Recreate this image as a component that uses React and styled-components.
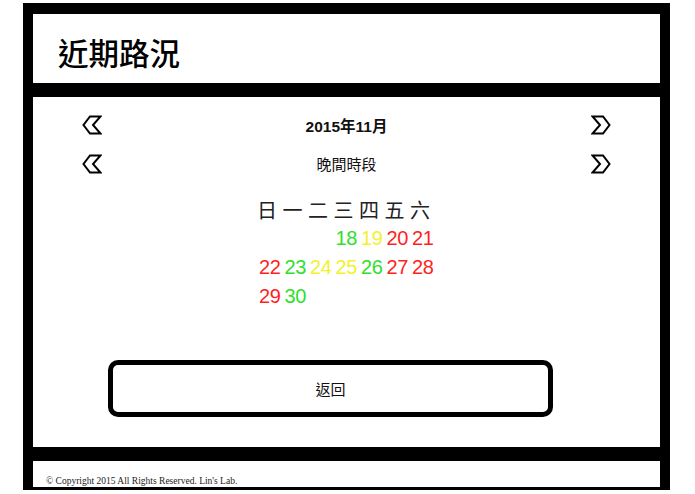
import React from 'react';
import styled, { createGlobalStyle } from 'styled-components';

const GlobalStyle = createGlobalStyle`
  html, body {
    margin: 0;
    padding: 0;
    background: #fff;
  }
  * {
    box-sizing: border-box;
  }
`;

const CJK = `"Liberation Sans", "Noto Sans CJK TC", sans-serif`;

const Frame = styled.div`
  margin: 3px 0 0 23px;
  width: 647px;
  height: 487px;
  background: #000;
  padding: 11px 10px 3px 10px;
  display: flex;
  flex-direction: column;
  gap: 14px;
`;

const Header = styled.header`
  height: 69px;
  background: #fff;
  display: flex;
  align-items: center;
  padding: 8px 0 0 25px;
`;

const Title = styled.h1`
  margin: 0;
  font-family: "Noto Sans CJK TC", sans-serif;
  font-size: 30.5px;
  font-weight: 500;
  color: #000;
  line-height: 1;
`;

const Main = styled.main`
  height: 350px;
  background: #fff;
  padding: 17px 49px 0 49px;
  display: flex;
  flex-direction: column;
`;

const NavRow = styled.div`
  display: grid;
  grid-template-columns: 20px 1fr 20px;
  align-items: center;
  height: 20px;
  margin-bottom: ${(p) => p.$gap || 0}px;
`;

const NavLabel = styled.div`
  text-align: center;
  font-family: ${CJK};
  font-size: ${(p) => (p.$bold ? 15.5 : 15)}px;
  font-weight: ${(p) => (p.$bold ? 700 : 400)};
  color: #111;
`;

const ArrowButton = styled.button`
  border: 0;
  padding: 0;
  background: none;
  width: 20px;
  height: 20px;
  display: block;
  cursor: pointer;
`;

const Calendar = styled.div`
  margin: 22px 0 0 175px;
  display: grid;
  grid-template-columns: repeat(7, 25.5px);
  grid-auto-rows: 29px;
  align-items: center;
`;

const WeekDay = styled.div`
  text-align: left;
  font-family: "Noto Sans CJK TC", sans-serif;
  font-size: 20px;
  color: #222;
  line-height: 29px;
`;

const Day = styled.div`
  text-align: center;
  font-family: "Liberation Sans", Arial, sans-serif;
  font-size: 20px;
  letter-spacing: -0.3px;
  line-height: 29px;
  color: ${(p) => p.$color};
`;

const BackButton = styled.button`
  margin: 49px 0 0 26px;
  width: 445px;
  height: 57px;
  border: 5px solid #000;
  border-radius: 10px;
  background: #fff;
  font-family: "Noto Sans CJK TC", sans-serif;
  font-size: 15px;
  color: #111;
  cursor: pointer;
`;

const Footer = styled.footer`
  height: 26px;
  background: #fff;
  overflow: hidden;
  padding: 14px 0 0 13px;
  font-family: "Liberation Serif", "Times New Roman", serif;
  font-size: 9.5px;
  line-height: 12px;
  color: #222;
`;

const Chevron = ({ dir }) => (
  <svg width="20" height="20" viewBox="0 0 20 20">
    <polygon
      points="8,1.5 18.5,1.5 11,10 18.5,18.5 8,18.5 1.5,10"
      fill="#fff"
      stroke="#000"
      strokeWidth="2"
      strokeLinejoin="miter"
      transform={dir === 'right' ? 'translate(20,0) scale(-1,1)' : undefined}
    />
  </svg>
);

const GREEN = '#2ee02e';
const YELLOW = '#f2f22c';
const RED = '#ff1f1f';

const weekDays = ['日', '一', '二', '三', '四', '五', '六'];
const days = [
  null, null, null,
  { d: 18, c: GREEN },
  { d: 19, c: YELLOW },
  { d: 20, c: RED },
  { d: 21, c: RED },
  { d: 22, c: RED },
  { d: 23, c: GREEN },
  { d: 24, c: YELLOW },
  { d: 25, c: YELLOW },
  { d: 26, c: GREEN },
  { d: 27, c: RED },
  { d: 28, c: RED },
  { d: 29, c: RED },
  { d: 30, c: GREEN },
];

export default function App() {
  return (
    <>
      <GlobalStyle />
      <Frame>
        <Header>
          <Title>近期路況</Title>
        </Header>
        <Main>
          <NavRow $gap={19}>
            <ArrowButton aria-label="上個月"><Chevron dir="left" /></ArrowButton>
            <NavLabel $bold>2015年11月</NavLabel>
            <ArrowButton aria-label="下個月"><Chevron dir="right" /></ArrowButton>
          </NavRow>
          <NavRow>
            <ArrowButton aria-label="上個時段"><Chevron dir="left" /></ArrowButton>
            <NavLabel>晚間時段</NavLabel>
            <ArrowButton aria-label="下個時段"><Chevron dir="right" /></ArrowButton>
          </NavRow>
          <Calendar>
            {weekDays.map((w) => (
              <WeekDay key={w}>{w}</WeekDay>
            ))}
            {days.map((item, i) =>
              item ? (
                <Day key={i} $color={item.c}>{item.d}</Day>
              ) : (
                <Day key={i} $color="transparent" />
              )
            )}
          </Calendar>
          <BackButton>返回</BackButton>
        </Main>
        <Footer>© Copyright 2015 All Rights Reserved. Lin's Lab.</Footer>
      </Frame>
    </>
  );
}
